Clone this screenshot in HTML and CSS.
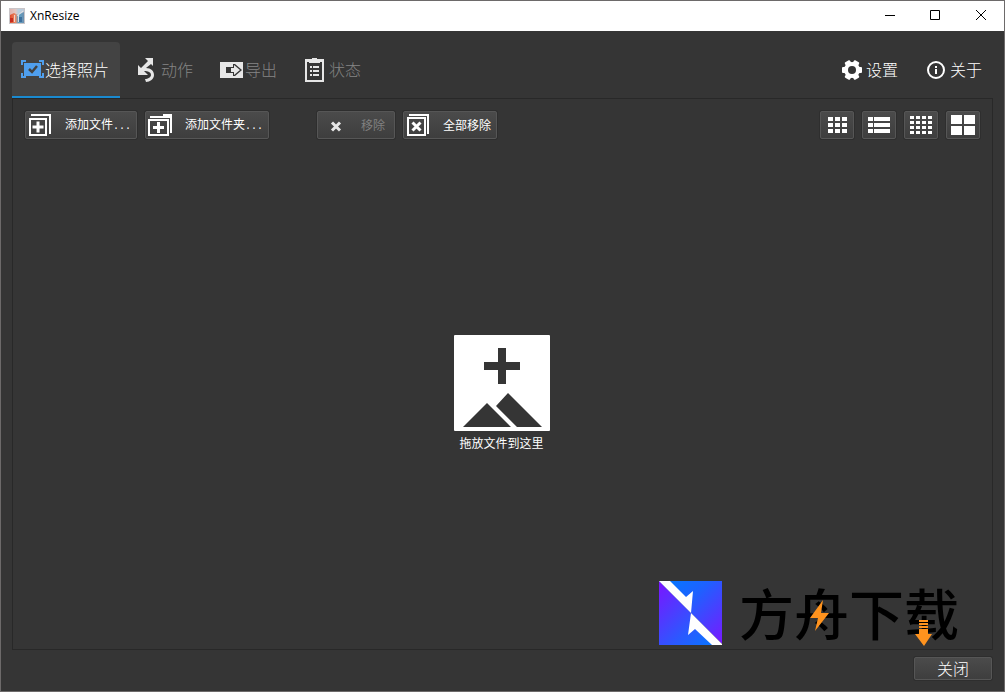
FILE: index.html
```html
<!DOCTYPE html>
<html lang="zh-CN">
<head>
<meta charset="utf-8">
<meta name="viewport" content="width=device-width, initial-scale=1">
<title>XnResize</title>
<link rel="stylesheet" href="styles.css">
</head>
<body>
<div class="window">
  <header class="titlebar">
    <svg class="app-icon" width="16" height="16" viewBox="0 0 16 16">
      <defs><linearGradient id="app" x1="0" y1="0" x2="1" y2="0"><stop offset="0" stop-color="#e04a28"/><stop offset=".4" stop-color="#e88b68"/><stop offset=".6" stop-color="#5ba4c8"/><stop offset="1" stop-color="#6d8fae"/></linearGradient></defs>
      <rect width="16" height="16" fill="#c9c5c8"/>
      <rect x="1" y="1" width="14" height="14" fill="url(#app)"/>
      <path d="M1 1h14v3L9 7 5 5 1 7z" fill="#dfe3ea" opacity=".7"/>
      <path d="M5.500 7v7M9.500 7v7M14 3L8 8" stroke="#f3e9e6" stroke-width="1" fill="none" opacity=".8"/>
      <path d="M1 10h3v4H1z" fill="#c52d20"/>
      <path d="M10 9h3v5h-3z" fill="#3c6f9c"/>
    </svg>
    <h1 class="title">XnResize</h1>
    <div class="window-controls">
      <button class="window-button" aria-label="最小化"><svg width="12" height="12" viewBox="0 0 12 12"><path d="M2 6.500h10" stroke="#000"/></svg></button>
      <button class="window-button" aria-label="最大化"><svg width="12" height="12" viewBox="0 0 12 12"><path d="M1.500 1.500h9v9h-9z" fill="none" stroke="#000"/></svg></button>
      <button class="window-button" aria-label="关闭窗口"><svg width="12" height="12" viewBox="0 0 12 12"><path d="M1 1l10 10M11 1L1 11" stroke="#000"/></svg></button>
    </div>
  </header>

  <main class="body">
    <nav class="tabs">
      <button class="tab tab-active">
        <svg width="24" height="24" viewBox="0 0 24 24"><path d="M3 5h17v13H3z" fill="#4f9fee"/><path d="M1 7V3h4M18 3h4v4M1 15v4h4M18 19h4v-4" fill="none" stroke="#4f9fee" stroke-width="2"/><path d="M8 11l3 3 5-6" fill="none" stroke="#414141" stroke-width="2.500"/></svg><span>选择照片</span>
      </button>
      <button class="tab">
        <svg width="24" height="24" viewBox="0 0 24 24"><path d="M8 0h8v8l-2-2-5 4c5 0 8 3 8 7s-4 7-8 7l-1-3c3 0 6-2 6-4 0-3-3-4-7-4l4 4H1V7l3 3 7-7z" fill="#e6e6e6"/></svg><span>动作</span>
      </button>
      <button class="tab">
        <svg width="24" height="24" viewBox="0 0 24 24"><path d="M-1 4h23v16H-1z" fill="#e6e6e6"/><path d="M5 9h7V6h2l7 6-7 6h-2v-3H5z" fill="#353535"/><path d="M10 10h3V7l6 5-6 5v-3h-3z" fill="#e6e6e6"/></svg><span>导出</span>
      </button>
      <button class="tab">
        <svg width="24" height="24" viewBox="0 0 24 24"><path d="M0 1h7V0h5v1h7v23H0z" fill="#e6e6e6"/><path d="M2 4h15v18H2z" fill="#353535"/><path d="M4 1h11v4H4z" fill="#e6e6e6"/><path d="M5 9h2M8 9h6M5 13h2M8 13h6M5 17h2M8 17h6" stroke="#e6e6e6" stroke-width="2"/></svg><span>状态</span>
      </button>
      <span class="spacer"></span>
      <button class="tab tab-link">
        <svg width="24" height="24" viewBox="0 0 24 24"><g fill="#fff"><circle cx="10" cy="12" r="8"/><rect y="9" width="20" height="6" rx="1"/><rect y="9" width="20" height="6" rx="1" transform="rotate(60 10 12)"/><rect y="9" width="20" height="6" rx="1" transform="rotate(120 10 12)"/></g><circle cx="10" cy="12" r="4" fill="#353535"/></svg><span>设置</span>
      </button>
      <button class="tab tab-link">
        <svg width="24" height="24" viewBox="0 0 24 24"><circle cx="10" cy="12" r="8" fill="none" stroke="#fff" stroke-width="2"/><path d="M9 8h2v2H9zM9 11h2v5H9z" fill="#fff"/></svg><span>关于</span>
      </button>
    </nav>

    <section class="pane">
      <div class="toolbar">
        <button class="button">
          <svg width="24" height="24" viewBox="0 0 24 24"><path d="M3 1h20v20h-2V3H3z" fill="#fff"/><path d="M2 6h16v16H2z" fill="none" stroke="#fff" stroke-width="2"/><path d="M10 8.500v11M4.500 14h11" stroke="#fff" stroke-width="3"/></svg><span class="label">添加文件<span class="dots">...</span></span>
        </button>
        <button class="button">
          <svg width="24" height="24" viewBox="0 0 24 24"><path d="M2 3h13V1h9v19h-2V5H2z" fill="#fff"/><path d="M1 7h19v15H1z" fill="none" stroke="#fff" stroke-width="2"/><path d="M10.500 9v11M5 14.500h11" stroke="#fff" stroke-width="3"/></svg><span class="label">添加文件夹<span class="dots">...</span></span>
        </button>
        <button class="button button-remove" disabled>
          <svg width="24" height="24" viewBox="0 0 24 24"><path d="M12 9.500l8 8M20 9.500l-8 8" stroke="#e6e6e6" stroke-width="3"/></svg><span class="label">移除</span>
        </button>
        <button class="button">
          <svg width="24" height="24" viewBox="0 0 24 24"><path d="M3 1h20v20h-2V3H3z" fill="#fff"/><path d="M2 5h17v17H2z" fill="none" stroke="#fff" stroke-width="2"/><path d="M6.500 9.500l8 8M14.500 9.500l-8 8" stroke="#fff" stroke-width="3"/></svg><span class="label">全部移除</span>
        </button>
        <span class="spacer"></span>
        <button class="button view" aria-label="缩略图"><svg width="24" height="24" viewBox="0 0 24 24"><path d="M3 6h5M10 6h5M17 6h5M3 12h5M10 12h5M17 12h5M3 18h5M10 18h5M17 18h5" stroke="#fff" stroke-width="4"/></svg></button>
        <button class="button view" aria-label="列表"><svg width="24" height="24" viewBox="0 0 24 24"><path d="M1 6h5M7 6h16M1 12h5M7 12h16M1 18h5M7 18h16" stroke="#fff" stroke-width="4"/></svg></button>
        <button class="button view" aria-label="小缩略图"><svg width="24" height="24" viewBox="0 0 24 24"><path d="M1 4.500h23M1 9.500h23M1 14.500h23M1 19.500h23" stroke="#fff" stroke-width="3" stroke-dasharray="4 2"/></svg></button>
        <button class="button view" aria-label="大缩略图"><svg width="24" height="24" viewBox="0 0 24 24"><path d="M0 2h11v9H0zM13 2h11v9H13zM0 13h11v9H0zM13 13h11v9H13z" fill="#fff"/></svg></button>
      </div>

      <div class="dropzone">
        <svg width="96" height="96" viewBox="0 0 96 96"><rect width="96" height="96" rx="1" fill="#fff"/><path d="M44 13h8v14h14v8H52v14h-8V35H30v-8h14zM9 92l24-24 24 24zM42 71l12-13 34 34H63z" fill="#353535"/></svg>
        <p class="drop-text">拖放文件到这里</p>
      </div>

      <div class="watermark">
        <svg width="64" height="64" viewBox="0 0 64 64">
          <defs>
            <linearGradient id="up" x1="0" y1="0" x2="1" y2="1"><stop offset="0" stop-color="#007cff"/><stop offset=".4" stop-color="#1e61ff"/><stop offset="1" stop-color="#7a18ff"/></linearGradient>
            <linearGradient id="down" x1="0" y1="0" x2="1" y2="1"><stop offset="0" stop-color="#7c14ff"/><stop offset=".6" stop-color="#2c58ff"/><stop offset="1" stop-color="#007cff"/></linearGradient>
          </defs>
          <path d="M0 0h63v63L32 32z" fill="url(#up)"/><path d="M0 0l32 32 31 32H0z" fill="url(#down)"/>
          <path d="M0 0h11l16 16 7-6-2 22 31 31v1H53L36 48l-7 6 3-22z" fill="#fff"/>
        </svg>
        <div class="brand">
          <span>方舟下载</span>
          <svg class="brand-marks" width="216" height="66" viewBox="0 0 216 66"><path d="M84 19L71 37h8l-3 13 14-18h-8z" fill="#ff931e"/><path d="M180 39h9v2h-9zM180 42h9v2h-9zM180 45h9v2h-9zM180 48h9v5h4l-8 12-9-12h4z" fill="#ff931e"/></svg>
        </div>
      </div>
    </section>

    <footer class="footer"><button class="button close">关闭</button></footer>
  </main>
</div>
</body>
</html>
```
FILE: styles.css
```css
* { box-sizing: border-box; }

body {
  margin: 0;
  font-family: "Noto Sans CJK SC", sans-serif;
  font-size: 12px;
  color: #fff;
  background: #353535;
}

button {
  margin: 0;
  border: 0;
  font: inherit;
  color: inherit;
  background: none;
}

svg {
  display: block;
  flex: none;
  overflow: visible;
}

.window {
  display: flex;
  flex-direction: column;
  min-height: 100vh;
  border: 1px solid #6d6a6a;
}

.titlebar {
  display: flex;
  align-items: center;
  height: 30px;
  padding-left: 8px;
  gap: 5px;
  color: #000;
  background: #fff;
}

.title {
  flex: 1;
  margin: 0;
  font: 400 12px/16px "Open Sans", sans-serif;
}

.window-controls { display: flex; align-self: stretch; }

.window-button {
  display: flex;
  align-items: center;
  justify-content: center;
  width: 46px;
  padding: 0 0 2px;
}

.body {
  display: flex;
  flex: 1;
  flex-direction: column;
  padding: 11px 11px 11px;
}

.tabs { display: flex; gap: 8px; }
.spacer { flex: 1; }

.tab {
  display: flex;
  align-items: center;
  height: 56px;
  padding: 2px 11px 0 9px;
  border-bottom: 2px solid transparent;
  border-radius: 4px 4px 0 0;
  font-size: 16px;
  font-weight: 300;
  line-height: 24px;
  white-space: nowrap;
  color: #858585;
}

.tab span { padding-bottom: 2px; }

.tab-active {
  color: #fff;
  background: #434343;
  border-bottom-color: #1a8ad0;
}

.tab-link { color: #fff; }

.pane {
  position: relative;
  display: flex;
  flex: 1;
  flex-direction: column;
  border: 1px solid #282828;
}

.toolbar {
  display: flex;
  gap: 8px;
  padding: 12px 12px 0;
}

.button {
  display: flex;
  align-items: center;
  gap: 13px;
  height: 28px;
  padding: 0 5px 0 2px;
  border: 1px solid #565656;
  border-radius: 2px;
  background: linear-gradient(#4b4b4b, #3e3e3e);
  box-shadow: 0 0 0 1px #2e2e2e;
  line-height: 16px;
  white-space: nowrap;
}

.label { flex: 1; text-align: center; }

.dots { font: 10px/16px "Liberation Mono", monospace; }

.button-remove {
  width: 78px;
  margin-left: 40px;
  color: #808080;
}

.view {
  justify-content: center;
  width: 34px;
  padding: 0;
}

.dropzone {
  display: flex;
  flex: 1;
  flex-direction: column;
  align-items: center;
  justify-content: center;
  gap: 4px;
  padding: 0 2px 2px 0;
}

.drop-text { margin: 0; line-height: 16px; }

.watermark {
  position: absolute;
  right: 33px;
  bottom: 4px;
  display: flex;
  gap: 16px;
}

.brand {
  position: relative;
  font-size: 55px;
  font-weight: 500;
  line-height: 60px;
  color: #000;
}

.brand-marks {
  position: absolute;
  top: 0;
  left: 0;
}

.footer {
  display: flex;
  justify-content: flex-end;
  padding: 7px 1px 0 0;
}

.close {
  justify-content: center;
  width: 78px;
  height: 23px;
  padding: 0 0 2px;
  font-size: 16px;
  font-weight: 300;
}
```
